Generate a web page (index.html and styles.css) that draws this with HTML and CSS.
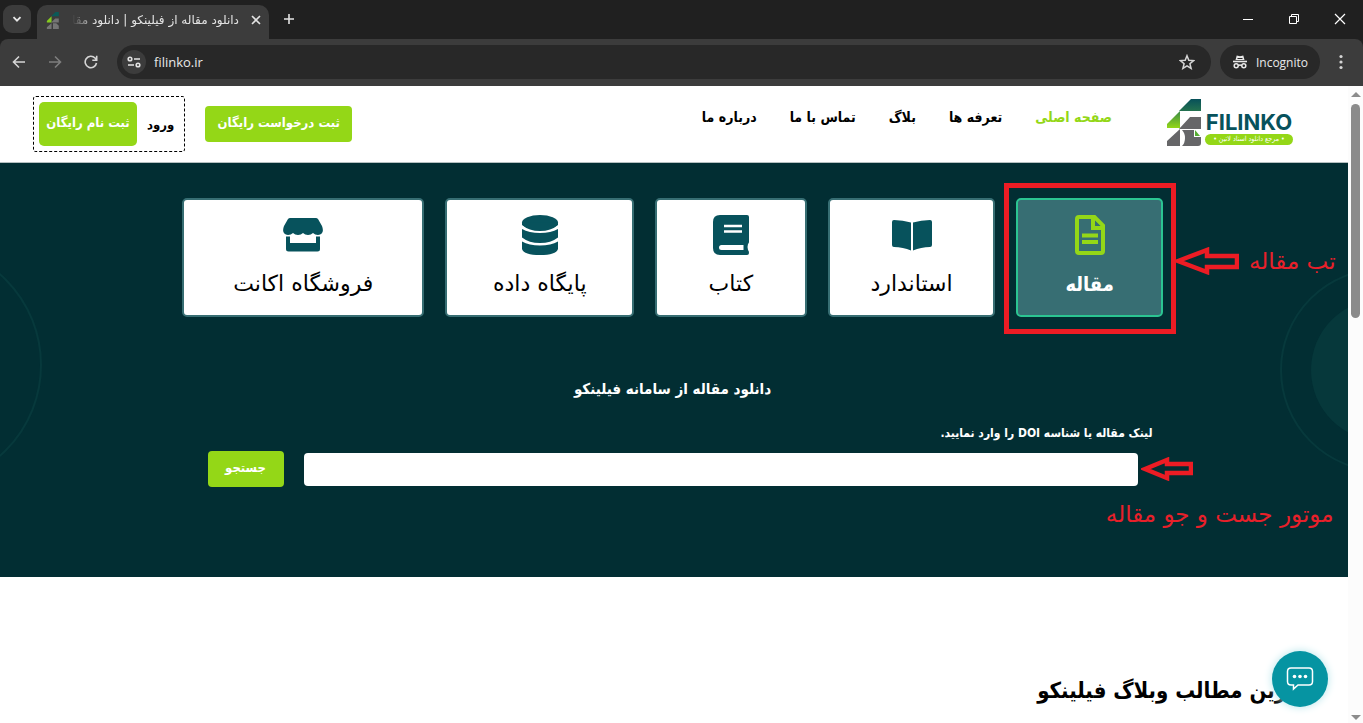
FILE: index.html
```html
<!DOCTYPE html>
<html lang="fa">
<head>
<meta charset="utf-8">
<title>دانلود مقاله از فیلینکو</title>
<link rel="stylesheet" href="styles.css">
</head>
<body>
<div class="tabstrip">
  <button class="tab-search" aria-label="Search tabs"><svg width="10" height="10" viewBox="0 0 10 10"><path d="M1.500 3.200 5 6.700l3.500-3.500" fill="none" stroke="#e8e8e8" stroke-width="1.800"/></svg></button>
  <div class="tab">
    <svg class="favicon" width="14" height="17" viewBox="0 0 34 47"><path d="M24 0h9v12H12z" fill="#0b5a58"/><path d="M13 12v17H0v-4z" fill="#86cc1e"/><path d="M23 18h10v11H12zM13 31v16H0v-5zM17 31h9l7 7v9H17z" fill="#757575"/></svg>
    <span class="tab-title" dir="rtl">دانلود مقاله از فیلینکو | دانلود مقا</span>
    <button class="plain" aria-label="Close tab"><svg width="10" height="10" viewBox="0 0 10 10"><path d="m1 1 8 8M9 1 1 9" stroke="#e3e3e3" stroke-width="1.600"/></svg></button>
  </div>
  <button class="plain new-tab" aria-label="New tab"><svg width="12" height="12" viewBox="0 0 12 12"><path d="M6 1v10M1 6h10" stroke="#e3e3e3" stroke-width="1.600"/></svg></button>
  <div class="window-controls">
    <button class="plain" aria-label="Minimize"><svg width="12" height="12" viewBox="0 0 12 12"><path d="M1 6.500h10" stroke="#fff"/></svg></button>
    <button class="plain" aria-label="Restore"><svg width="12" height="12" viewBox="0 0 12 12"><path d="M1.500 3.500h7v7h-7zM3.500 3.500v-2h7v7h-2" fill="none" stroke="#fff"/></svg></button>
    <button class="plain" aria-label="Close"><svg width="12" height="12" viewBox="0 0 12 12"><path d="m1 1 10 10M11 1 1 11" stroke="#fff" stroke-width="1.200"/></svg></button>
  </div>
</div>
<div class="toolbar">
  <div class="history">
    <button class="plain" aria-label="Back"><svg width="14" height="14" viewBox="0 0 14 14"><path d="M13 7H2M7 1.500 1.500 7 7 12.500" fill="none" stroke="#d5d5d5" stroke-width="1.600"/></svg></button>
    <button class="plain" aria-label="Forward"><svg width="14" height="14" viewBox="0 0 14 14"><path d="M1 7h11M7 1.500 12.500 7 7 12.500" fill="none" stroke="#7e7e7e" stroke-width="1.600"/></svg></button>
    <button class="plain" aria-label="Reload"><svg width="14" height="14" viewBox="0 0 14 14"><path d="M12.500 8A5.700 5.700 0 1 1 11 3l1.500 1.800M12.700.800v4.400H8.300" fill="none" stroke="#d5d5d5" stroke-width="1.600"/></svg></button>
  </div>
  <div class="omnibox">
    <button class="site-info" aria-label="Site information"><svg width="14" height="12" viewBox="0 0 14 12"><g fill="none" stroke="#e3e3e3" stroke-width="1.600"><circle cx="3" cy="3" r="1.800"/><path d="M7 3h6M1 9h6"/><circle cx="11" cy="9" r="1.800"/></g></svg></button>
    <input class="address" aria-label="Address" value="filinko.ir">
    <button class="plain" aria-label="Bookmark"><svg width="16" height="16" viewBox="0 0 16 16"><path d="m8 1.700 1.800 4.500 4.800.400-3.700 3.100 1.200 4.700L8 11.800l-4.100 2.600 1.200-4.700L1.400 6.600l4.800-.400z" fill="none" stroke="#d5d5d5" stroke-width="1.500"/></svg></button>
  </div>
  <button class="incognito"><svg width="16" height="14" viewBox="0 0 16 14"><path d="m3.500 5 1.200-4.500L8 1.200 11.300.500 12.500 5z" fill="#e8e8e8"/><path d="M1 6.500h14" stroke="#e8e8e8" stroke-width="1.600"/><path d="M5.500 3.500h5" stroke="#2a2a2a"/><g fill="none" stroke="#e8e8e8" stroke-width="1.500"><circle cx="4.200" cy="10.800" r="2"/><circle cx="11.800" cy="10.800" r="2"/><path d="M6.200 10.500q1.800-1 3.600 0"/></g></svg>Incognito</button>
  <button class="plain" aria-label="Menu"><svg width="4" height="16" viewBox="0 0 4 16" fill="#d5d5d5"><circle cx="2" cy="2.500" r="1.600"/><circle cx="2" cy="8" r="1.600"/><circle cx="2" cy="13.500" r="1.600"/></svg></button>
</div>
<div class="viewport">
  <div class="site" dir="rtl">
    <header class="header">
      <a class="logo" href="#" dir="ltr">
        <svg width="34" height="48" viewBox="0 0 34 48">
          <defs>
            <linearGradient id="teal" x1="0" y1="0" x2="0" y2="1"><stop offset="0" stop-color="#07505a"/><stop offset="1" stop-color="#24724f"/></linearGradient>
            <linearGradient id="lime" x1="0" y1="0" x2="0" y2="1"><stop offset="0" stop-color="#3a8a48"/><stop offset="1" stop-color="#94d717"/></linearGradient>
          </defs>
          <path d="M24 0h10v12H12z" fill="url(#teal)"/>
          <path d="M13 12v17H0v-4z" fill="url(#lime)"/>
          <path d="M23 18h11v12H12zM13 30v17H0v-5zM15 31h12v7h7v6q0 3-3 3H15q3-3 3-8t-3-8z" fill="#666668"/>
          <path d="M28 31v6h5z" fill="#55ad32"/>
        </svg>
        <span class="logo-text"><b class="logo-name">FILINKO</b><span class="logo-tag" dir="rtl">• مرجع دانلود اسناد لاتین •</span></span>
      </a>
      <nav class="nav"><a class="current" href="#">صفحه اصلی</a><a href="#">تعرفه ها</a><a href="#">بلاگ</a><a href="#">تماس با ما</a><a href="#">درباره ما</a></nav>
      <div class="actions">
        <a class="btn request" href="#">ثبت درخواست رایگان</a>
        <div class="account"><a class="login" href="#">ورود</a><a class="btn signup" href="#">ثبت نام رایگان</a></div>
      </div>
    </header>
    <main>
      <section class="hero">
        <span class="ring ring-left"></span><span class="ring ring-right"></span><span class="disc"></span>
        <div class="tabs">
          <div class="tab-cell">
            <button class="card active"><svg width="40" height="40" viewBox="0 0 40 40"><path d="M9 2h15.500L33 10.500V36q0 2-2 2H9q-2 0-2-2V4q0-2 2-2z" fill="none" stroke="#94d717" stroke-width="4"/><path d="M23 3v10h10" fill="none" stroke="#94d717" stroke-width="4"/><path d="M12 20.500h16M12 27h16" stroke="#94d717" stroke-width="4"/></svg>مقاله</button>
            <span class="frame"></span>
            <div class="note note-tab" dir="ltr"><svg width="64" height="28" viewBox="0 0 64 28"><path d="M3 14 32 3v6h30v11H32v5z" fill="none" stroke="#ec1c24" stroke-width="4.500"/></svg><span dir="rtl">تب مقاله</span></div>
          </div>
          <button class="card"><svg width="40" height="40" viewBox="0 0 40 40" fill="#07525c"><path d="M19 7.500v28Q11 32 2 32q-2 0-2-2V7q0-2 2-2 9 0 17 2.500zM21 7.500v28q8-3.500 17-3.500 2 0 2-2V7q0-2-2-2-9 0-17 2.500z"/></svg>استاندارد</button>
          <button class="card"><svg width="40" height="40" viewBox="0 0 40 40"><path d="M9 0h27q2 0 2 2v25q0 1-1 2-1 3 0 6 1 1 1 3 0 2-2 2H9q-7 0-7-7V7q0-7 7-7z" fill="#07525c"/><path d="M13 11h18M13 16.500h18" stroke="#fff" stroke-width="2.600"/><path d="M32.500 30H10.500q-2.500 0-2.500 2.500t2.500 2.500h22z" fill="#fff"/></svg>کتاب</button>
          <button class="card"><svg width="40" height="40" viewBox="0 0 40 40" fill="#07525c"><ellipse cx="20" cy="7.500" rx="18" ry="7.500"/><path d="M2 7.500h36V10q-7 6-18 6T2 10zM2 14q7 4 18 4t18-4v8.500q-7 5.500-18 5.500T2 22.500zM2 26.500q7 4 18 4t18-4V34q-2 6-18 6T2 34z"/></svg>پایگاه داده</button>
          <button class="card"><svg width="40" height="40" viewBox="0 0 40 40" fill="#07525c"><path d="M7 3h26q1 0 2 1l4 7q3 8-4 9-3 0-5-2-2 2-5 2t-5-2q-2 2-5 2t-5-2q-2 2-5 2-7-1-4-9l4-7q1-1 2-1z"/><path d="M3 21.500h4V28h26v-6.500h4V34q0 2.500-2.500 2.500h-29Q3 36.500 3 34z"/></svg>فروشگاه اکانت</button>
        </div>
        <h1 class="hero-title">دانلود مقاله از سامانه فیلینکو</h1>
        <form class="search">
          <label class="search-label" for="doi">لینک مقاله یا شناسه DOI را وارد نمایید.</label>
          <div class="search-row">
            <div class="field"><input class="search-input" id="doi" type="text">
              <div class="note note-search" dir="ltr"><svg width="52" height="24" viewBox="0 0 52 24"><path d="M4 12 26 3v4h24v9H26v5z" fill="none" stroke="#ec1c24" stroke-width="4.500"/></svg></div>
              <span class="note note-caption">موتور جست و جو مقاله</span>
            </div>
            <button class="btn submit" type="button">جستجو</button>
          </div>
        </form>
      </section>
      <section class="blog"><h2 class="blog-title">آخرین مطالب وبلاگ فیلینکو</h2></section>
    </main>
    <button class="chat" aria-label="Chat"><svg width="28" height="28" viewBox="0 0 28 28"><path d="M5 3h18q3.500 0 3.500 3.500v10Q26.500 20 23 20H12l-4.500 4v-4H5q-3.500 0-3.500-3.500v-10Q1.500 3 5 3z" fill="none" stroke="#fff" stroke-width="1.500"/><g fill="#fff"><circle cx="8.500" cy="11.500" r="1.800"/><circle cx="14" cy="11.500" r="1.800"/><circle cx="19.500" cy="11.500" r="1.800"/></g></svg></button>
  </div>
  <div class="scrollbar"><span class="arrow-up"></span><span class="thumb"></span><span class="arrow-down"></span></div>
</div>
</body>
</html>
```
FILE: styles.css
```css
* { box-sizing: border-box; }
body {
  margin: 0;
  height: 100vh;
  display: flex;
  flex-direction: column;
  overflow: hidden;
  background: #202020;
  font-family: "DejaVu Sans", sans-serif;
}
button, input { font: inherit; color: inherit; border: 0; margin: 0; padding: 0; }
a { color: inherit; text-decoration: none; }
svg { display: block; flex: none; }
.plain { background: none; display: flex; align-items: center; justify-content: center; }

/* Browser frame */
.tabstrip { display: flex; align-items: center; height: 39px; flex: none; padding: 0 17px 2px 3px; }
.tab-search {
  width: 28px; height: 28px; border-radius: 9px; background: #3c3c3c;
  display: flex; align-items: center; justify-content: center;
}
.tab {
  display: flex; align-items: center; gap: 12px;
  width: 232px; height: 34px; margin: 5px 0 -2px 6px; padding: 0 11px 4px 9px;
  background: #3c3c3c; border-radius: 10px 10px 0 0; color: #e3e3e3;
}
.tab-title {
  flex: 1; white-space: nowrap; font-size: 12px;
  mask-image: linear-gradient(to right, transparent, #000 24px);
}
.new-tab { margin-left: 14px; }
.window-controls { display: flex; gap: 34px; margin-left: auto; }
.toolbar {
  display: flex; align-items: center; height: 47px; flex: none; gap: 9px;
  padding: 0 20px 1px 12px; background: #3c3c3c; border-radius: 8px 8px 0 0;
  font-family: "Open Sans", sans-serif; color: #e8e8e8;
}
.history { display: flex; gap: 22px; margin-right: 10px; }
.omnibox {
  flex: 1; display: flex; align-items: center; height: 34px; gap: 8px;
  padding: 0 16px 0 5px; border-radius: 17px; background: #282828;
}
.site-info {
  width: 24px; height: 24px; border-radius: 12px; background: #3c3c3c;
  display: flex; align-items: center; justify-content: center;
}
.address { flex: 1; background: none; font-size: 13px; outline: 0; }
.incognito {
  display: flex; align-items: center; gap: 8px; height: 34px; padding: 0 12px;
  margin-right: 10px; border-radius: 17px; background: #282828; font-size: 12px;
}

/* Page */
.viewport { flex: 1; min-height: 0; display: flex; background: #fff; }
.site { flex: 1; position: relative; overflow: hidden; color: #000; }
.header {
  display: flex; align-items: flex-start; height: 77px; padding: 10px 55px 0 33px;
  border-bottom: 1px solid #b5c0c1;
}
.header, .hero-title, .search, .blog-title, .active { font-family: "DejaVu Sans Condensed", "DejaVu Sans", sans-serif; }
.logo { display: flex; align-items: flex-end; gap: 4px; margin-top: 3px; }
.logo-text { display: flex; flex-direction: column; width: 88px; }
.logo-name { font: 700 22px/22px Inter, sans-serif; color: #07525c; text-align: center; }
.logo-tag {
  margin: 1px 0 2px; border-radius: 6px; background: #94d717; color: #fff;
  font-size: 7px; line-height: 11px; text-align: center; white-space: nowrap;
}
.nav { display: flex; gap: 33px; margin: 10px 55px 0 0; font-size: 14px; font-weight: 700; line-height: 22px; white-space: nowrap; }
.current { color: #94d717; }
.actions { display: flex; align-items: center; gap: 20px; margin-right: auto; }
.btn {
  display: flex; align-items: center; justify-content: center; border-radius: 4px;
  background: #94d717; color: #fff; font-size: 13px; font-weight: 700; line-height: 18px;
  white-space: nowrap; padding-bottom: 3px;
}
.request { width: 147px; height: 36px; }
.account { display: flex; align-items: center; gap: 10px; height: 56px; padding: 0 10px 0 5px; border: 1px dashed #000; border-radius: 3px; }
.login { font-size: 13px; font-weight: 700; }
.signup { width: 98px; height: 44px; border-radius: 5px; }

.hero { position: relative; overflow: hidden; height: 414px; padding: 35px 22px 0 19px; background: #022e33; }
.ring, .disc { position: absolute; border-radius: 50%; }
.ring { border: 2px solid #07393c; }
.ring-left { width: 244px; height: 244px; left: -202px; top: 80px; }
.ring-right { width: 204px; height: 204px; right: -136px; top: 105px; }
.disc { width: 142px; height: 142px; right: -105px; top: 136px; background: #06383b; }

.tabs {
  position: relative; display: grid; gap: 21px; max-width: 981px; margin: 0 auto;
  grid-template-columns: 147fr 168fr 152fr 189fr 243fr;
}
.tab-cell { position: relative; display: flex; }
.card {
  flex: 1; display: flex; flex-direction: column; align-items: center; gap: 14px;
  height: 119px; padding: 15px 0 0; border: 2px solid #376e73; border-radius: 5px;
  background: #fff; color: #000; font-size: 22px; line-height: 30px; white-space: nowrap;
}
.card.active { background: #376e73; border-color: #2bc592; color: #fff; font-size: 20px; font-weight: 700; }
.frame { position: absolute; inset: -15px -13px -17px -12px; border: 5px solid #ec1c24; }
.note { position: absolute; color: #e8202a; font-family: "DejaVu Sans", sans-serif; font-size: 23px; line-height: 30px; white-space: nowrap; }
.note-tab { left: calc(100% + 12px); top: 48px; display: flex; align-items: center; gap: 10px; }

.hero-title { margin: 60px 0 0; color: #fff; font-size: 15px; line-height: 24px; text-align: center; }
.search { position: relative; max-width: 960px; margin: 22px auto 0; color: #fff; }
.search-label { display: block; font-size: 12px; font-weight: 700; line-height: 20px; }
.search-row { display: flex; align-items: center; gap: 20px; margin-top: 8px; padding: 0 15px; }
.field { position: relative; flex: 1; }
.search-input { display: block; width: 100%; height: 33px; border-radius: 4px; background: #fff; color: #000; padding: 0 10px; }
.note-search { left: calc(100% + 3px); top: 4px; }
.note-caption { right: -196px; top: 46px; }
.submit { width: 76px; height: 36px; }

.blog { padding: 96px 40px 0; }
.blog-title { margin: 0; font-size: 22px; line-height: 36px; }
.chat {
  position: absolute; right: 20px; bottom: 16px; width: 56px; height: 56px; border-radius: 50%;
  display: flex; align-items: center; justify-content: center;
  background: #0694a2; box-shadow: 0 0 8px #b5e4e9;
}

.scrollbar { width: 15px; display: flex; flex-direction: column; align-items: center; padding: 6px 0 3px; background: #fcfcfc; }
.arrow-up, .arrow-down { border: 5px solid transparent; }
.arrow-up { border-top: 0; border-bottom-color: #8b8b8b; }
.arrow-down { margin-top: auto; border-bottom: 0; border-top-color: #8b8b8b; }
.thumb { width: 9px; height: 34%; margin-top: 7px; border-radius: 5px; background: #8b8b8b; }
```
